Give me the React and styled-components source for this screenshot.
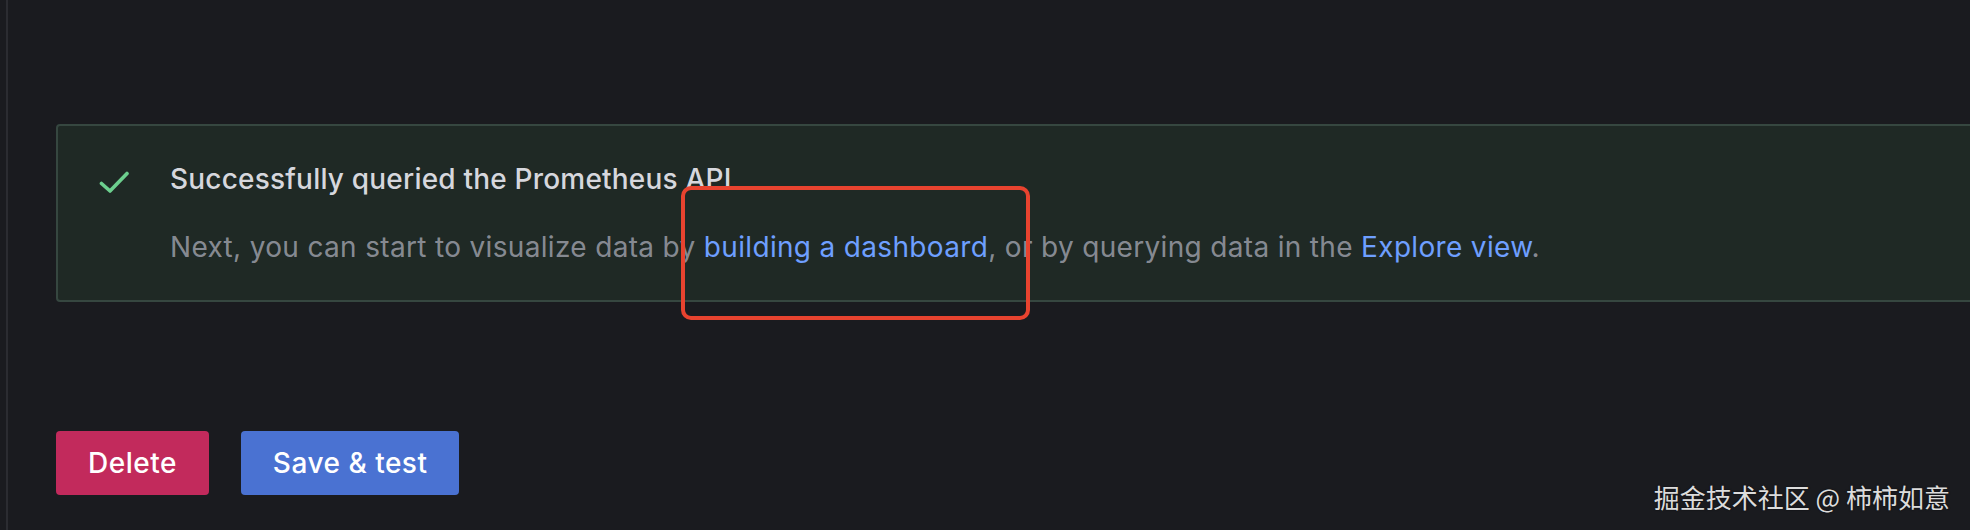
import React from 'react'
import styled, { createGlobalStyle } from 'styled-components'

const GlobalStyle = createGlobalStyle`
  html, body {
    margin: 0;
    padding: 0;
    background: #1a1b1f;
    overflow: hidden;
  }
  body {
    font-family: Inter, "Noto Sans", sans-serif;
  }
`

const Page = styled.div`
  position: relative;
  display: flex;
  height: 530px;
  width: 1970px;
  padding-left: 6px;
  box-sizing: border-box;
  background: #1a1b1f;
  overflow: hidden;
`

const Content = styled.div`
  flex: 1;
  display: flex;
  flex-direction: column;
  border-left: 2px solid #2b2c31;
  padding: 124px 0 0 48px;
`

const Alert = styled.div`
  display: flex;
  margin-right: -40px;
  background: #1f2925;
  border: 2px solid #364740;
  border-radius: 4px;
  padding: 32px 0;
`

const IconBox = styled.div`
  width: 30px;
  padding: 13px 41px 0 41px;
  color: #6ccf8e;
`

const Body = styled.div`
  display: flex;
  flex-direction: column;
  gap: 26px;
`

const Title = styled.div`
  color: #d6d7dd;
  font-size: 28px;
  font-weight: 500;
  line-height: 42px;
  letter-spacing: 0.2px;
`

const Text = styled.div`
  color: rgba(204, 204, 220, 0.62);
  font-size: 28px;
  font-weight: 400;
  line-height: 42px;
  letter-spacing: 0.33px;
`

const Link = styled.a`
  color: #6e9fff;
  text-decoration: none;
`

const Actions = styled.div`
  display: flex;
  gap: 32px;
  margin-top: 129px;
`

const Button = styled.button`
  height: 64px;
  padding: 0 32px;
  border: none;
  border-radius: 4px;
  font-family: Inter, "Noto Sans", sans-serif;
  font-size: 28px;
  font-weight: 500;
  letter-spacing: 0.5px;
  color: #ffffff;
  background: ${props => (props.variant === 'destructive' ? '#c22a5c' : '#4a72d2')};
  cursor: pointer;
`

const Highlight = styled.div`
  position: absolute;
  left: 681px;
  top: 186px;
  width: 349px;
  height: 134px;
  box-sizing: border-box;
  border: 4px solid #e8432f;
  border-radius: 10px;
  pointer-events: none;
`

const Watermark = styled.div`
  position: absolute;
  right: 20px;
  bottom: 20px;
  font-family: "Noto Sans CJK SC", "Noto Sans", sans-serif;
  font-size: 26px;
  line-height: 26px;
  color: #dcdcdc;
  text-shadow: 0 0 2px rgba(0, 0, 0, 0.6);
  white-space: nowrap;
`

const CheckIcon = () => (
  <svg width="30" height="22" viewBox="0 0 30 22" fill="none">
    <polyline
      points="2.5,12.5 11,20 28,2.5"
      stroke="currentColor"
      strokeWidth="3.6"
      strokeLinecap="round"
      strokeLinejoin="round"
    />
  </svg>
)

export default function App() {
  return (
    <>
      <GlobalStyle />
      <Page>
        <Content>
          <Alert>
            <IconBox>
              <CheckIcon />
            </IconBox>
            <Body>
              <Title>Successfully queried the Prometheus API</Title>
              <Text>
                Next, you can start to visualize data by{' '}
                <Link href="#">building a dashboard</Link>, or by querying data in the{' '}
                <Link href="#">Explore view</Link>.
              </Text>
            </Body>
          </Alert>
          <Actions>
            <Button variant="destructive">Delete</Button>
            <Button variant="primary">Save &amp; test</Button>
          </Actions>
        </Content>
        <Highlight />
        <Watermark>掘金技术社区 @ 柿柿如意</Watermark>
      </Page>
    </>
  )
}
